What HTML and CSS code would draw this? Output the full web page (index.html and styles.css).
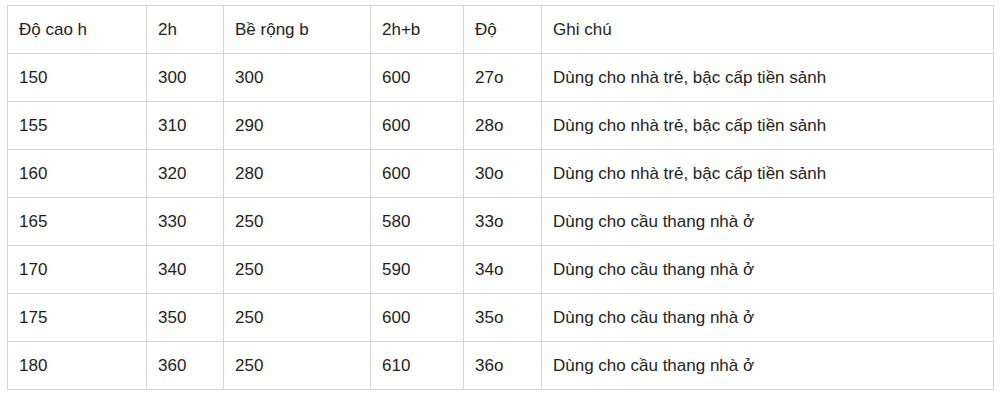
FILE: index.html
```html
<!DOCTYPE html>
<html lang="vi">
<head>
<meta charset="utf-8">
<link rel="stylesheet" href="styles.css">
</head>
<body>
<table class="stairs">
  <colgroup>
    <col class="c1"><col class="c2"><col class="c3"><col class="c4"><col class="c5"><col class="c6">
  </colgroup>
  <tbody>
    <tr><td>Độ cao h</td><td>2h</td><td>Bề rộng b</td><td>2h+b</td><td>Độ</td><td>Ghi chú</td></tr>
    <tr><td>150</td><td>300</td><td>300</td><td>600</td><td>27o</td><td>Dùng cho nhà trẻ, bậc cấp tiền sảnh</td></tr>
    <tr><td>155</td><td>310</td><td>290</td><td>600</td><td>28o</td><td>Dùng cho nhà trẻ, bậc cấp tiền sảnh</td></tr>
    <tr><td>160</td><td>320</td><td>280</td><td>600</td><td>30o</td><td>Dùng cho nhà trẻ, bậc cấp tiền sảnh</td></tr>
    <tr><td>165</td><td>330</td><td>250</td><td>580</td><td>33o</td><td>Dùng cho cầu thang nhà ở</td></tr>
    <tr><td>170</td><td>340</td><td>250</td><td>590</td><td>34o</td><td>Dùng cho cầu thang nhà ở</td></tr>
    <tr><td>175</td><td>350</td><td>250</td><td>600</td><td>35o</td><td>Dùng cho cầu thang nhà ở</td></tr>
    <tr><td>180</td><td>360</td><td>250</td><td>610</td><td>36o</td><td>Dùng cho cầu thang nhà ở</td></tr>
  </tbody>
</table>
</body>
</html>
```

FILE: styles.css
```css
html, body {
  margin: 0;
  padding: 0;
  background: #ffffff;
}

body {
  padding: 5px 0 0 7px;
  font-family: "Liberation Sans", Arial, sans-serif;
  font-size: 17px;
  color: #1e1e1e;
}

.stairs {
  border-collapse: collapse;
  table-layout: fixed;
  width: 986px;
}

.stairs td {
  border: 1px solid #d6d6d6;
  height: 48px;
  padding: 0 0 1px 11px;
  box-sizing: border-box;
  vertical-align: middle;
  white-space: nowrap;
  line-height: 19px;
}

.c1 { width: 139px; }
.c2 { width: 77px; }
.c3 { width: 147px; }
.c4 { width: 93px; }
.c5 { width: 78px; }
.c6 { width: 452px; }
```
